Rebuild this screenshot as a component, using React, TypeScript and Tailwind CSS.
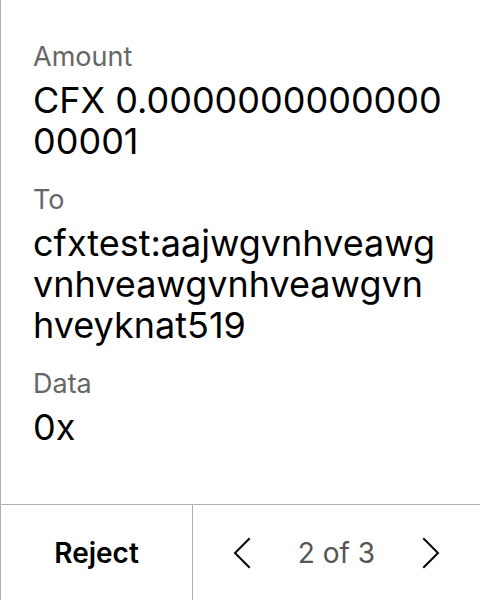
import React from 'react';

// Zeilen des Transaktionsdetails
const fields = [
  { label: 'Amount', value: 'CFX 0.000000000000000001' },
  { label: 'To', value: 'cfxtest:aajwgvnhveawgvnhveawgvnhveawgvnhveyknat519' },
  { label: 'Data', value: '0x' },
];

function Chevron({ dir }: { dir: 'left' | 'right' }) {
  return (
    <svg width="18" height="32" viewBox="0 0 18 32" fill="none">
      <path
        d={dir === 'left' ? 'M16 2 L2 16 L16 30' : 'M2 2 L16 16 L2 30'}
        stroke="#000"
        strokeWidth="2"
        strokeLinecap="square"
      />
    </svg>
  );
}

export default function App() {
  return (
    <div
      className="w-[480px] h-[600px] bg-white border-l border-[#b0b0b0] flex flex-col"
      style={{ fontFamily: 'Inter, "Noto Sans", sans-serif' }}
    >
      <div className="flex-1 pl-[32px] pr-[37px] pt-[39px] flex flex-col gap-[20px]">
        {fields.map((f) => (
          <div key={f.label} className="flex flex-col">
            <div className="text-[27px] leading-[36px] text-[#666]">{f.label}</div>
            <div className="mt-[5px] text-[36px] leading-[41px] text-black break-all">{f.value}</div>
          </div>
        ))}
      </div>
      <div className="h-[96px] border-t border-[#b0b0b0] flex">
        <button className="w-[192px] border-r border-[#b0b0b0] flex items-center justify-center text-[28px] font-semibold text-black">
          Reject
        </button>
        <div className="flex-1 flex items-center justify-center gap-[47px]">
          <Chevron dir="left" />
          <span className="text-[28px] text-[#555]">2 of 3</span>
          <Chevron dir="right" />
        </div>
      </div>
    </div>
  );
}
